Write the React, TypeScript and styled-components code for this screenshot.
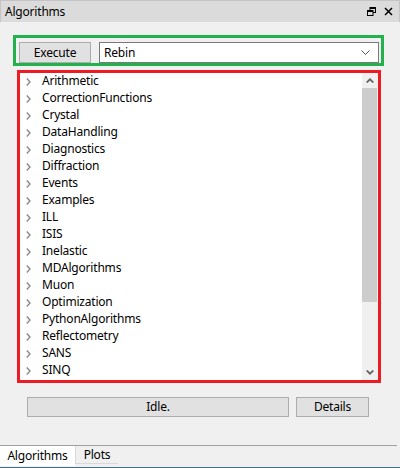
import React from "react";
import styled, { createGlobalStyle } from "styled-components";

const Global = createGlobalStyle`
  html, body { margin: 0; padding: 0; background: #f0f0f0; }
  body { font-family: "Noto Sans", "Open Sans", sans-serif; font-size: 12px; letter-spacing: -0.2px; color: #000; }
  * { box-sizing: border-box; }
`;

const Window = styled.div`
  width: 400px;
  height: 468px;
  display: flex;
  flex-direction: column;
  background: #f0f0f0;
  overflow: hidden;
`;

const TitleBar = styled.div`
  height: 22px;
  display: flex;
  align-items: center;
  justify-content: space-between;
  background: #dbdbdb;
  border-top: 1px solid #c4c4c4;
  border-left: 1px solid #c4c4c4;
  border-right: 1px solid #c4c4c4;
  padding: 0 6px 0 4px;
  margin-right: 0;
`;

const Title = styled.span`
  font-size: 12px;
  line-height: 1;
`;

const TitleIcons = styled.div`
  display: flex;
  gap: 8px;
  align-items: center;
`;

const Body = styled.div`
  flex: 1;
  display: flex;
  flex-direction: column;
  padding: 13px 16px 0 13px;
`;

const ExecBox = styled.div`
  width: 371px;
  height: 31px;
  border: 3px solid #22b14c;
  display: flex;
  align-items: flex-end;
  padding: 0 2px 0 3px;
  gap: 8px;
`;

const PushButton = styled.button<{ $w: number }>`
  width: ${(p) => p.$w}px;
  height: 21px;
  flex: none;
  background: #e1e1e1;
  border: 1px solid #adadad;
  font-family: inherit;
  font-size: 12px;
  letter-spacing: inherit;
  color: #000;
  padding: 0;
  line-height: 1;
  display: flex;
  align-items: center;
  justify-content: center;
`;

const Combo = styled.div`
  flex: 1;
  height: 21px;
  background: #fff;
  border: 1px solid #7a7a7a;
  display: flex;
  align-items: center;
  justify-content: space-between;
  padding: 0 8px 0 4px;
`;

const TreeBox = styled.div`
  margin: 4px 0 0 4px;
  width: 364px;
  height: 313px;
  border: 3px solid #ed1c24;
  background: #fff;
  display: flex;
`;

const TreeList = styled.div`
  flex: 1;
  display: flex;
  flex-direction: column;
  overflow: hidden;
`;

const Row = styled.div`
  height: 17px;
  flex: none;
  display: flex;
  align-items: center;
  padding-left: 6px;
  gap: 11px;
`;

const RowText = styled.span`
  line-height: 1;
  position: relative;
  top: -1px;
`;

const ScrollBar = styled.div`
  width: 16px;
  flex: none;
  background: #f0f0f0;
  display: flex;
  flex-direction: column;
`;

const ScrollArrow = styled.div`
  height: 15px;
  flex: none;
  display: flex;
  align-items: center;
  justify-content: center;
`;

const Thumb = styled.div`
  height: 214px;
  flex: none;
  background: #cdcdcd;
  margin: 0 1px 0 0;
`;

const Spacer = styled.div`
  flex: 1;
`;

const StatusRow = styled.div`
  display: flex;
  gap: 7px;
  margin: 14px 0 0 14px;
`;

const StatusButton = styled(PushButton)`
  height: 20px;
`;

const TabBar = styled.div`
  margin-top: auto;
  height: 22px;
  border-top: 1px solid #a0a0a0;
  margin-right: 3px;
  display: flex;
  align-items: flex-start;
`;

const Tab = styled.div<{ $active?: boolean; $w: number }>`
  width: ${(p) => p.$w}px;
  height: ${(p) => (p.$active ? 20 : 18)}px;
  background: ${(p) => (p.$active ? "#fff" : "#f0f0f0")};
  border-bottom: ${(p) => (p.$active ? "none" : "1px solid #d9d9d9")};
  border-left: ${(p) => (p.$active ? "none" : "1px solid #d9d9d9")};
  display: flex;
  align-items: center;
  justify-content: center;
  font-size: 12px;
  line-height: 1;
`;

const BottomLine = styled.div`
  height: 1px;
  background: #3d6f8a;
`;

const TabArea = styled.div`
  display: flex;
  flex-direction: column;
`;

const Chevron = () => (
  <svg width="5" height="8" viewBox="0 0 5 8">
    <polyline points="0.8,0.5 4,4 0.8,7.5" fill="none" stroke="#8a8a8a" strokeWidth="1.4" />
  </svg>
);

const items = [
  "Arithmetic",
  "CorrectionFunctions",
  "Crystal",
  "DataHandling",
  "Diagnostics",
  "Diffraction",
  "Events",
  "Examples",
  "ILL",
  "ISIS",
  "Inelastic",
  "MDAlgorithms",
  "Muon",
  "Optimization",
  "PythonAlgorithms",
  "Reflectometry",
  "SANS",
  "SINQ",
];

export default function App() {
  return (
    <Window>
      <Global />
      <TitleBar>
        <Title>Algorithms</Title>
        <TitleIcons>
          <svg width="9" height="9" viewBox="0 0 9 9">
            <rect x="3" y="0.5" width="5.5" height="5" fill="none" stroke="#000" strokeWidth="1" />
            <rect x="3" y="0.5" width="5.5" height="1.5" fill="#000" />
            <rect x="0.5" y="3.5" width="5.5" height="5" fill="#dbdbdb" stroke="#000" strokeWidth="1" />
            <rect x="0.5" y="3.5" width="5.5" height="1.5" fill="#000" />
          </svg>
          <svg width="9" height="9" viewBox="0 0 9 9">
            <path d="M1 1 L8 8 M8 1 L1 8" stroke="#000" strokeWidth="1.5" />
          </svg>
        </TitleIcons>
      </TitleBar>
      <Body>
        <ExecBox>
          <PushButton $w={72}>Execute</PushButton>
          <Combo>
            <span>Rebin</span>
            <svg width="9" height="5" viewBox="0 0 9 5">
              <polyline points="0.5,0.5 4.5,4.5 8.5,0.5" fill="none" stroke="#555" strokeWidth="1" />
            </svg>
          </Combo>
        </ExecBox>
        <TreeBox>
          <TreeList>
            {items.map((t) => (
              <Row key={t}>
                <Chevron />
                <RowText>{t}</RowText>
              </Row>
            ))}
          </TreeList>
          <ScrollBar>
            <ScrollArrow>
              <svg width="8" height="5" viewBox="0 0 8 5">
                <path d="M0 4 L4 0 L8 4 L6.5 5 L4 2.5 L1.5 5 Z" fill="#606060" />
              </svg>
            </ScrollArrow>
            <Thumb />
            <Spacer />
            <ScrollArrow>
              <svg width="8" height="5" viewBox="0 0 8 5">
                <path d="M0 1 L4 5 L8 1 L6.5 0 L4 2.5 L1.5 0 Z" fill="#606060" />
              </svg>
            </ScrollArrow>
          </ScrollBar>
        </TreeBox>
        <StatusRow>
          <StatusButton $w={262}>Idle.</StatusButton>
          <StatusButton $w={73}>Details</StatusButton>
        </StatusRow>
      </Body>
      <TabArea>
        <TabBar>
          <Tab $active $w={75}>Algorithms</Tab>
          <Tab $w={43}>Plots</Tab>
        </TabBar>
        <BottomLine />
      </TabArea>
    </Window>
  );
}
